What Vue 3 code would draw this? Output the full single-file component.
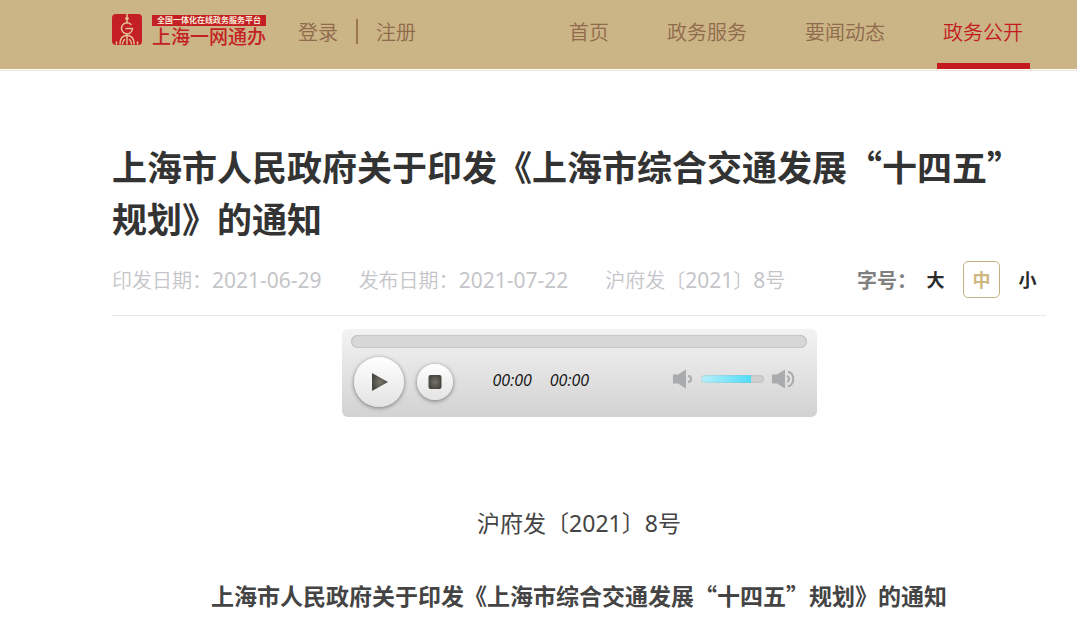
<script setup>
import { ref } from 'vue'

const navItems = ['首页', '政务服务', '要闻动态', '政务公开']
const activeNav = ref('政务公开')
const sizes = ['大', '中', '小']
const activeSize = ref('中')
const progress = ref(0)
const volume = ref(80)
</script>

<template>
  <div class="page">
    <header class="topbar">
      <a class="logo" href="#" aria-label="上海一网通办">
        <svg class="logo-mark" viewBox="0 0 30 31" aria-hidden="true">
          <rect width="30" height="31" rx="4" fill="#c41f24" />
          <g fill="none" stroke="#e0bf92" stroke-width="1.500" stroke-linecap="round">
            <path d="M15 0.500V9M15 20v10" />
            <path d="M19 10.500A5.500 5.500 0 1 0 20.500 14.500H14" />
            <path d="M8 30c0-5 2-8.500 7-8.500s7 3.500 7 8.500" />
            <path d="M10.500 30c0-2 1-3.500 2-4.500M19.500 30c0-2-1-3.500-2-4.500M4.500 28v2M25.500 28v2" />
          </g>
          <circle cx="15" cy="4.500" r="1.800" fill="#e0bf92" />
        </svg>
        <span class="logo-text">
          <span class="logo-tag">全国一体化在线政务服务平台</span>
          <span class="logo-name">上海一网通办</span>
        </span>
      </a>
      <div class="account">
        <a href="#">登录</a>
        <span class="bar"></span>
        <a href="#">注册</a>
      </div>
      <nav class="nav">
        <a
          v-for="item in navItems"
          :key="item"
          href="#"
          :class="{ active: item === activeNav }"
          @click.prevent="activeNav = item"
        >{{ item }}</a>
      </nav>
    </header>

    <main class="content">
      <h1>上海市人民政府关于印发《上海市综合交通发展“十四五”<wbr />规划》的通知</h1>
      <div class="meta">
        <span>印发日期：<time>2021-06-29</time></span>
        <span>发布日期：<time>2021-07-22</time></span>
        <span>沪府发〔<span class="num">2021</span>〕<span class="num">8</span>号</span>
        <div class="sizes">
          <span class="sizes-label">字号：</span>
          <button
            v-for="s in sizes"
            :key="s"
            type="button"
            :class="{ active: s === activeSize }"
            @click="activeSize = s"
          >{{ s }}</button>
        </div>
      </div>

      <section class="player" aria-label="语音播报">
        <input v-model="progress" class="seek" type="range" min="0" max="100" aria-label="播放进度" />
        <div class="controls">
          <button class="round play" type="button" aria-label="播放">
            <svg viewBox="0 0 18 18" width="18" height="18">
              <defs>
                <radialGradient id="glyph">
                  <stop offset="0" stop-color="#77756a" />
                  <stop offset="1" stop-color="#484740" />
                </radialGradient>
              </defs>
              <path d="M1 0L17 9L1 18Z" fill="url(#glyph)" />
            </svg>
          </button>
          <button class="round stop" type="button" aria-label="停止">
            <svg viewBox="0 0 14 14" width="14" height="14">
              <rect x="0.500" width="13" height="14" rx="2" fill="url(#glyph)" />
            </svg>
          </button>
          <span class="times"><span>00:00</span><span>00:00</span></span>
          <div class="volume">
            <svg viewBox="0 0 20 20" width="20" height="20" aria-hidden="true">
              <path d="M0 5.500h5l8-5v19l-8-5H0Z" fill="#aaabad" />
              <path d="M15 7a3 3 0 0 1 0 6" fill="none" stroke="#aaabad" stroke-width="2" />
            </svg>
            <input
              v-model="volume"
              class="level"
              type="range"
              min="0"
              max="100"
              aria-label="音量"
              :style="{ '--fill': volume + '%' }"
            />
            <svg viewBox="0 0 24 20" width="24" height="20" aria-hidden="true">
              <path d="M0 5.500h5l8-5v19l-8-5H0Z" fill="#aaabad" />
              <path d="M15 7a3.200 3.200 0 0 1 0 6M16 2.500c7 2 7 13 0 15" fill="none" stroke="#aaabad" stroke-width="2" />
            </svg>
          </div>
        </div>
      </section>

      <article class="doc">
        <p>沪府发〔2021〕8号</p>
        <h2>上海市人民政府关于印发《上海市综合交通发展“十四五”规划》的通知</h2>
      </article>
    </main>
  </div>
</template>

<style>
body {
  background: #fff;
}
</style>

<style scoped>
.page {
  font-family: "Noto Sans CJK SC", "Noto Sans", sans-serif;
  font-size: 20px;
  color: #333;
  text-spacing-trim: space-all;
}
a {
  color: inherit;
  text-decoration: none;
}
button {
  font-family: inherit;
  margin: 0;
  padding: 0;
  cursor: pointer;
}
.topbar {
  display: flex;
  height: 69px;
  padding: 0 47px 0 112px;
  background: #cbb485;
  border-bottom: 1px solid #fff;
  box-shadow: 0 1px 0 #ece6d8;
  color: #8f6a4c;
  font-weight: 350;
}
.logo {
  display: flex;
  gap: 10px;
  align-items: flex-start;
  padding-top: 14px;
  color: #c41f24;
  font-family: "Liberation Sans", "Noto Sans CJK SC", sans-serif;
}
.logo-mark {
  width: 30px;
  height: 31px;
}
.logo-text {
  display: flex;
  flex-direction: column;
  font-weight: 700;
  padding-top: 1px;
}
.logo-tag {
  background: #c41f24;
  color: #f6ead6;
  font-size: 8px;
  line-height: 11px;
  text-align: center;
}
.logo-name {
  font-size: 19px;
  line-height: 23px;
  font-weight: 500;
}
.account {
  display: flex;
  align-items: center;
  gap: 18px;
  height: 63px;
  margin-left: 32px;
}
.bar {
  width: 2px;
  height: 25px;
  background: #9b7550;
}
.nav {
  display: flex;
  gap: 45px;
  margin-left: auto;
}
.nav a {
  height: 63px;
  padding: 0 7px 0 6px;
  line-height: 64px;
  border-bottom: 6px solid transparent;
}
.nav a.active {
  color: #c41a1f;
  border-bottom-color: #c41a1f;
}
.content {
  padding: 70px 31px 0 112px;
}
h1 {
  margin: 0;
  font-size: 35px;
  line-height: 52px;
  font-weight: 700;
}
.meta {
  display: flex;
  align-items: center;
  gap: 37px;
  height: 71px;
  border-bottom: 1px solid #e8e8e8;
  color: #c5c5c9;
  font-weight: 350;
  white-space: nowrap;
}
.meta time,
.num {
  font-family: "Noto Sans", sans-serif;
  font-size: 21px;
  line-height: 20px;
  font-weight: 400;
}
.sizes {
  display: flex;
  align-items: center;
  margin-left: auto;
  font-weight: 700;
}
.sizes-label {
  color: #808080;
}
.sizes button {
  width: 37px;
  height: 37px;
  margin-left: 9px;
  border: 1px solid transparent;
  border-radius: 5px;
  background: none;
  color: #2b2b2b;
  font-size: 18px;
  line-height: 35px;
  font-weight: 700;
}
.sizes button:first-of-type {
  margin-left: 0;
}
.sizes button.active {
  border-color: #c4b084;
  color: #cdb880;
}
.player {
  box-sizing: border-box;
  width: 475px;
  max-width: 100%;
  height: 88px;
  margin: 13px auto 0;
  padding: 6px 10px 0 9px;
  border-radius: 6px;
  background: linear-gradient(#f3f3f3, #d2d2d2);
}
input[type="range"] {
  appearance: none;
  display: block;
  margin: 0;
  border-radius: 7px;
}
.seek {
  width: 100%;
  height: 13px;
  background: #d8d8d8;
  box-shadow: inset 0 0 2px #999;
}
.seek::-webkit-slider-thumb,
.level::-webkit-slider-thumb {
  appearance: none;
  width: 1px;
  height: 1px;
}
.controls {
  display: flex;
  align-items: center;
  height: 67px;
  padding-left: 3px;
}
.round {
  display: flex;
  align-items: center;
  justify-content: center;
  border: 0;
  border-radius: 50%;
  background: linear-gradient(#fff, #e3e3e3);
  box-shadow: 0 1px 4px #777;
}
.play {
  width: 50px;
  height: 50px;
  padding-left: 3px;
}
.stop {
  width: 36px;
  height: 36px;
  margin-left: 13px;
}
.times {
  display: flex;
  gap: 18px;
  margin-left: 40px;
  font-family: "Open Sans", "Noto Sans", sans-serif;
  font-size: 16px;
  line-height: 22px;
  font-style: italic;
  color: #111;
  padding-bottom: 4px;
}
.volume {
  display: flex;
  align-items: center;
  gap: 8px;
  margin-left: auto;
  padding: 0 11px 6px 0;
}
.level {
  width: 63px;
  height: 8px;
  background:
    linear-gradient(90deg, #b9f0fa, #4fdcf8) 0 0 / var(--fill) 100% no-repeat,
    #d0d0d0;
  box-shadow: inset 0 0 2px #aaa;
}
.doc {
  padding-top: 86px;
  text-align: center;
  font-size: 23px;
  line-height: 40px;
  color: #444;
}
.doc p {
  margin: 0 0 32px;
  font-family: "Noto Sans", "Noto Sans CJK SC", sans-serif;
}
.doc h2 {
  margin: 0;
  font-size: 23px;
  font-weight: 700;
}
</style>
